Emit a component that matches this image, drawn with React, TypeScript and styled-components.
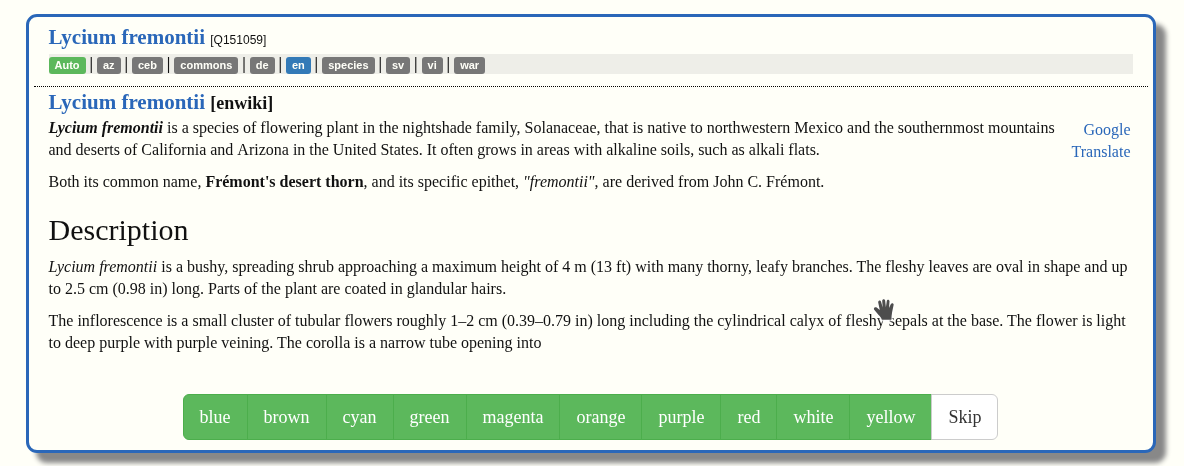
import React from "react";
import styled, { createGlobalStyle, css } from "styled-components";

const Global = createGlobalStyle`
  * { box-sizing: border-box; }
  body { margin: 0; background: #fffff8; color: #111; font: 16px/22px "Liberation Serif", serif; }
`;
const Page = styled.main`height: 466px; padding: 14px 28px 13px 26px; overflow: hidden;`;
const Card = styled.section`
  position: relative; height: 439px; padding: 0 5px; display: flex; flex-direction: column;
  border: 3px solid #2a67b9; border-radius: 11px; background: #fffff8; box-shadow: 10px 10px 5px #888;
  will-change: transform;
`;
const Header = styled.header`height: 70px; padding: 9px 15px 0 14.5px; border-bottom: 1px dotted #000;`;
const Title = styled.h1`
  margin: 0; height: 22px; font-size: 21px; line-height: 22px; color: #2a67b9; white-space: nowrap;
`;
const ItemId = styled.small`font: 12px "Liberation Sans", sans-serif; color: #111;`;
const WikiName = styled.span`font-size: 18px; color: #111;`;
const Languages = styled.nav`
  height: 20px; margin-top: 6px; padding-top: 3px; display: flex; background: #eeeee8;
  font-weight: bold; line-height: 14px; white-space: pre;
`;
const Separator = styled.span`margin: 0 0 0 -0.24px;`;
const Badge = styled.a<{ $tone?: string }>`
  height: 17px; padding: 0 6.05px; border-radius: 3px; background: ${(p) => p.$tone ?? "#777"}; color: #fffff8;
  font: bold 11px/17px "Liberation Sans", sans-serif;
`;
const Article = styled.article`height: 300px; padding: 4px 15px 0 14.5px;`;
const Translate = styled.a`float: right; width: 64px; padding: 2px 2.5px 0 0; text-align: right; color: #2a67b9;`;
const Paragraph = styled.p`margin: 0 0 10px;`;
const Place = styled.span`margin-left: 0.02px;`;
const Intro = styled.div`margin-top: 4px;`;
const Heading = styled.h2`margin: 20px 0 10px; font-size: 30px; line-height: 33px; font-weight: 400;`;
const Choices = styled.div`display: flex; justify-content: center; margin-top: 7px; padding-right: 1px;`;
const Choice = styled.button<{ $plain?: boolean }>`
  height: 46px; padding: 0 16px; margin: 0 0 0 -1px; border: 1px solid #4cae4c; background: #5cb85c; color: #fff;
  font: 18px/24px "Liberation Serif", serif;
  &:first-child { margin-left: 0; border-radius: 6px 0 0 6px; }
  &:last-child { border-radius: 0 6px 6px 0; }
  ${(p) => p.$plain && css`border-color: #ccc; background: #fff; color: #333;`}
`;
const Hand = styled.svg`
  position: absolute; left: 844px; top: 281px; overflow: visible;
  filter: drop-shadow(0 0 1px #fff) drop-shadow(0 1px 1px #fff);
`;

const languages = ["Auto", "az", "ceb", "commons", "de", "en", "species", "sv", "vi", "war"];
const tones: Record<string, string> = { Auto: "#5cb85c", en: "#337ab7" };
const colors = ["blue", "brown", "cyan", "green", "magenta", "orange", "purple", "red", "white", "yellow"];

export default function App() {
  return (
    <Page>
      <Global />
      <Card>
        <Header>
          <Title>Lycium fremontii <ItemId>[Q151059]</ItemId></Title>
          <Languages>
            {languages.map((l, i) => (
              <React.Fragment key={l}>
                {i > 0 && <Separator>{" | "}</Separator>}
                <Badge $tone={tones[l]}>{l}</Badge>
              </React.Fragment>
            ))}
          </Languages>
        </Header>
        <Article>
          <Title as="h2">Lycium fremontii <WikiName>[enwiki]</WikiName></Title>
          <Intro>
            <Translate>Google Translate</Translate>
            <Paragraph><b><i>Lycium fremontii</i></b> is a species of flowering plant in the nightshade family, Solanaceae, that is native to northwestern Mexico and the southernmost mountains and deserts of California and <Place>Arizona</Place> in the United States. It often grows in areas with alkaline soils, such as alkali flats.</Paragraph>
            <Paragraph>Both its common name, <b>Frémont's desert thorn</b>, and its specific epithet, <i>"fremontii"</i>, are derived from John C. Frémont.</Paragraph>
          </Intro>
          <Heading>Description</Heading>
          <Paragraph><i>Lycium fremontii</i> is a bushy, spreading shrub approaching a maximum height of 4 m (13 ft) with many thorny, leafy branches. The fleshy leaves are oval in shape and up to 2.5 cm (0.98 in) long. Parts of the plant are coated in glandular hairs.</Paragraph>
          <Paragraph>The inflorescence is a small cluster of tubular flowers roughly 1–2 cm (0.39–0.79 in) long including the cylindrical calyx of fleshy sepals at the base. The flower is light to deep purple with purple veining. The corolla is a narrow tube opening into</Paragraph>
        </Article>
        <Choices>
          {colors.map((c) => <Choice key={c}>{c}</Choice>)}
          <Choice $plain>Skip</Choice>
        </Choices>
        <Hand width="22" height="23" viewBox="0 0 22 23" fill="#4d4d4d" aria-hidden="true">
          <path d="M8.8 21.8C8.5 19.8 7 18.4 5.6 16.9L1.2 11.8C.2 10.2 1.8 8.6 3.7 9.6L6.8 12.1 5.2 4.6C5 2.4 7.5 1.8 8.1 3.7L9.7 9.4 9.2 3C9.2 .9 12 .8 12.2 2.9L12.9 9.3 13.8 2.9C14.2 1 16.7 1.5 16.5 3.5L16 10 17.9 6.1C18.8 4.4 21 5.1 20.6 7.1L19.1 14.2C18.6 16.7 18.5 19.4 18.4 21.8Z" />
        </Hand>
      </Card>
    </Page>
  );
}
